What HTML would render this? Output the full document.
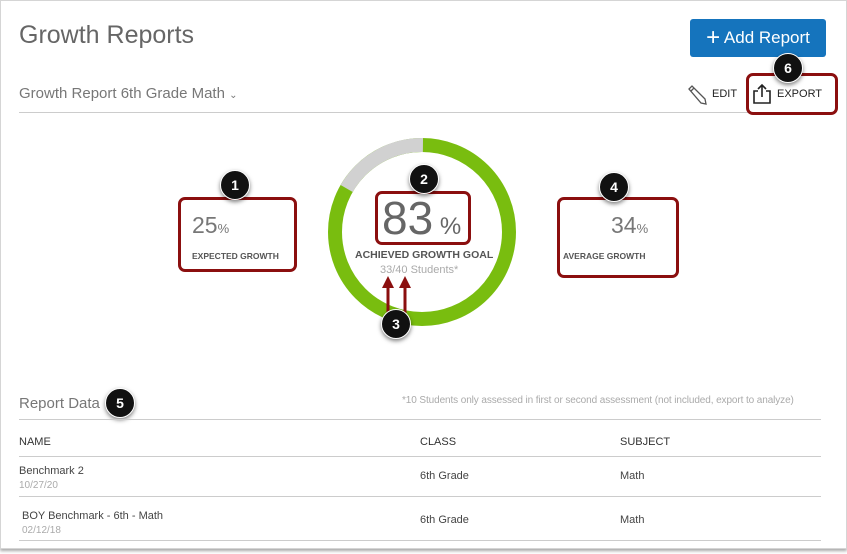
<!DOCTYPE html>
<html><head><style>
body{margin:0;width:847px;height:554px;background:#fff;font-family:"Liberation Sans",sans-serif;position:relative;overflow:hidden}
.a{position:absolute;white-space:nowrap}
.card{position:absolute;left:0;top:0;width:845px;height:547px;border:1px solid #d5d5d5;box-shadow:0 2px 3px rgba(0,0,0,.35)}
.rb{position:absolute;border:3px solid #8b0f0f;border-radius:7px;box-sizing:border-box}
.bd{position:absolute;width:28px;height:28px;border-radius:50%;background:#111;color:#fff;font-size:14px;font-weight:bold;text-align:center;line-height:28px;box-shadow:0 2px 4px rgba(0,0,0,.5);border:1px solid #fff;box-sizing:content-box;margin:-15px 0 0 -15px}
.hl{position:absolute;height:1px;background:#ccc}
.th{font-size:11px;color:#333}
.td{font-size:11px;color:#444}
.dt{font-size:10px;color:#aaa}
</style></head><body>
<div class="card"></div>
<div class="a" style="left:19px;top:21px;font-size:25px;color:#666">Growth Reports</div>
<div class="a" style="left:690px;top:19px;width:136px;height:38px;background:#1574bd;border-radius:3px;color:#fff;font-size:17px;line-height:38px;text-align:center"><span style="font-size:24px;vertical-align:-2px">+</span> Add Report</div>
<div class="a" style="left:19px;top:85px;font-size:15px;color:#777">Growth Report 6th Grade Math <span style="font-size:10px">&#8964;</span></div>
<div class="hl" style="left:19px;top:112px;width:802px"></div>
<svg class="a" style="left:686px;top:84px" width="22" height="22" viewBox="0 0 22 22"><path d="M3 5 L6 2 L19 15 L20 20 L15 19 Z M5 7 L8 4" fill="none" stroke="#555" stroke-width="1.3"/></svg>
<div class="a" style="left:712px;top:88px;font-size:11px;color:#222">EDIT</div>
<svg class="a" style="left:751px;top:83px" width="22" height="22" viewBox="0 0 22 22"><path d="M7 8 H3 V20 H19 V8 H15 M11 14 V2 M7 6 L11 2 L15 6" fill="none" stroke="#222" stroke-width="1.6"/></svg>
<div class="a" style="left:777px;top:88px;font-size:11px;color:#222">EXPORT</div>

<svg class="a" style="left:328px;top:138px" width="188" height="188" viewBox="0 0 188 188">
<circle cx="94" cy="94" r="87" fill="none" stroke="#79bd0f" stroke-width="14"/>
<circle cx="94" cy="94" r="87" fill="none" stroke="#d1d1d1" stroke-width="14" stroke-dasharray="92 500" transform="rotate(-150 94 94)"/>
</svg>
<div class="a" style="left:192px;top:212px;font-size:23px;color:#777">25<span style="font-size:13px">%</span></div>
<div class="a" style="left:192px;top:251px;font-size:8.5px;font-weight:bold;color:#555">EXPECTED GROWTH</div>
<div class="a" style="left:382px;top:191px;font-size:46px;color:#666">83<span style="font-size:24px"> %</span></div>
<div class="a" style="left:355px;top:249px;font-size:10.5px;font-weight:bold;color:#555">ACHIEVED GROWTH GOAL</div>
<div class="a" style="left:380px;top:264px;font-size:11px;color:#aaa">33/40 Students*</div>
<div class="a" style="left:611px;top:212px;font-size:23px;color:#777">34<span style="font-size:13px">%</span></div>
<div class="a" style="left:563px;top:251px;font-size:8.5px;font-weight:bold;color:#555">AVERAGE GROWTH</div>

<div class="rb" style="left:178px;top:197px;width:119px;height:75px"></div>
<div class="rb" style="left:375px;top:191px;width:96px;height:54px"></div>
<div class="rb" style="left:557px;top:197px;width:122px;height:81px"></div>
<div class="rb" style="left:746px;top:73px;width:92px;height:42px"></div>
<svg class="a" style="left:378px;top:274px" width="36" height="40" viewBox="0 0 36 40"><path d="M10 40 V10 M27 40 V10" stroke="#8b0f0f" stroke-width="3"/><path d="M4 14 L10 2 L16 14 Z M21 14 L27 2 L33 14 Z" fill="#8b0f0f"/></svg>

<div class="bd" style="left:235px;top:185px">1</div>
<div class="bd" style="left:424px;top:179px">2</div>
<div class="bd" style="left:396px;top:324px">3</div>
<div class="bd" style="left:614px;top:187px">4</div>
<div class="bd" style="left:120px;top:403px">5</div>
<div class="bd" style="left:788px;top:68px">6</div>

<div class="a" style="left:19px;top:395px;font-size:15px;color:#777">Report Data</div>
<div class="a" style="left:402px;top:395px;font-size:10px;letter-spacing:-0.1px;color:#aaa">*10 Students only assessed in first or second assessment (not included, export to analyze)</div>
<div class="hl" style="left:19px;top:419px;width:802px"></div>
<div class="a th" style="left:19px;top:436px">NAME</div>
<div class="a th" style="left:420px;top:436px">CLASS</div>
<div class="a th" style="left:620px;top:436px">SUBJECT</div>
<div class="hl" style="left:19px;top:456px;width:802px"></div>
<div class="a td" style="left:19px;top:465px">Benchmark 2</div>
<div class="a dt" style="left:19px;top:480px">10/27/20</div>
<div class="a td" style="left:420px;top:470px">6th Grade</div>
<div class="a td" style="left:620px;top:470px">Math</div>
<div class="hl" style="left:19px;top:496px;width:802px"></div>
<div class="a td" style="left:22px;top:510px">BOY Benchmark - 6th - Math</div>
<div class="a dt" style="left:22px;top:525px">02/12/18</div>
<div class="a td" style="left:420px;top:514px">6th Grade</div>
<div class="a td" style="left:620px;top:514px">Math</div>
<div class="hl" style="left:19px;top:540px;width:802px"></div>
</body></html>
